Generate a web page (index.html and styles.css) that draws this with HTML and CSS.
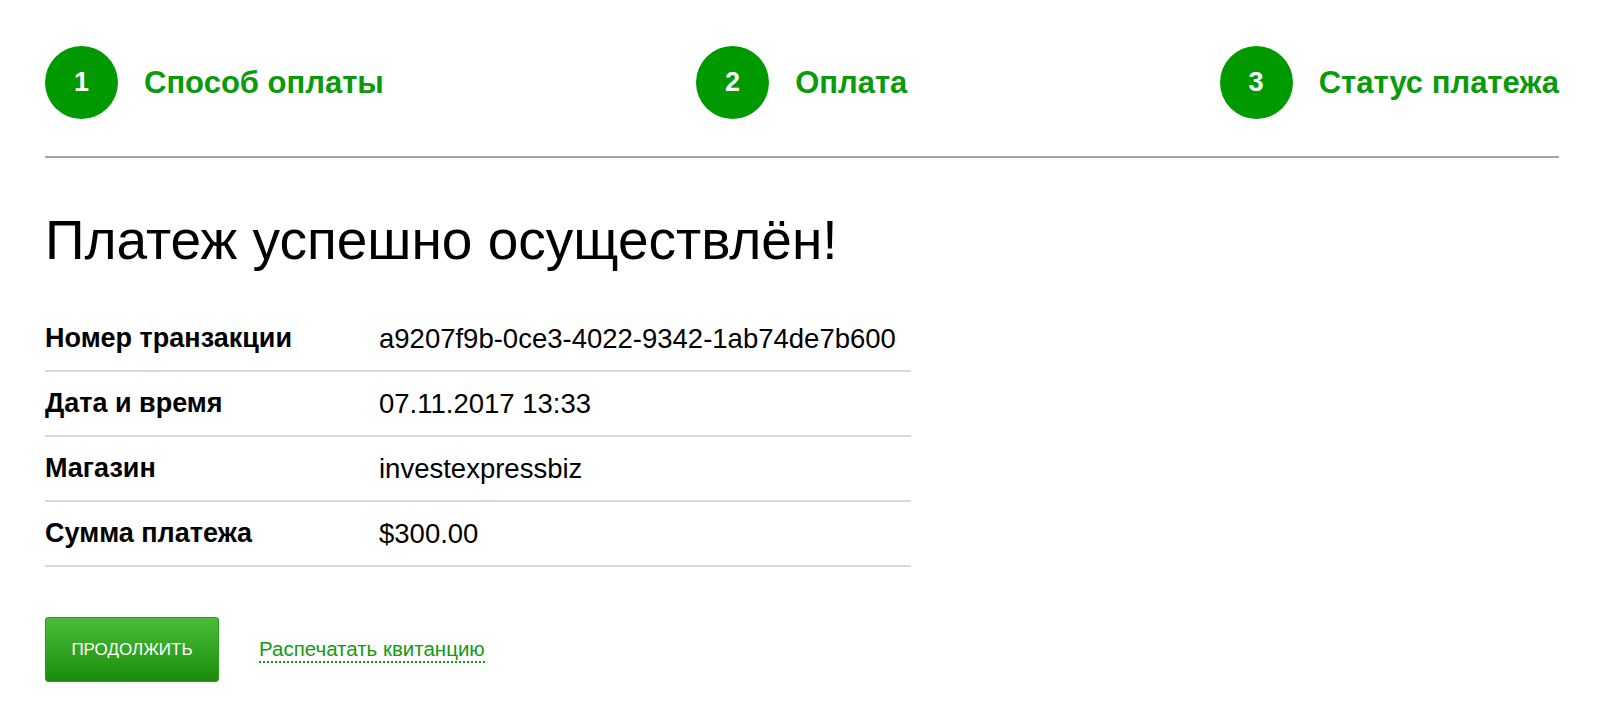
FILE: index.html
```html
<!DOCTYPE html>
<html>

<head>
  <meta charset="UTF-8">
  <title>Статус платежа</title>
  <link rel="stylesheet" href="styles.css">
</head>

<body>
  <div class="wrapper">
    <div class="steps">
      <div class="step">
        <span class="step-num">1</span>
        <span class="step-title">Способ оплаты</span>
      </div>
      <div class="step">
        <span class="step-num">2</span>
        <span class="step-title">Оплата</span>
      </div>
      <div class="step">
        <span class="step-num">3</span>
        <span class="step-title">Статус платежа</span>
      </div>
    </div>

    <h1 class="title">Платеж успешно осуществлён!</h1>

    <table class="details">
      <tr>
        <th>Номер транзакции</th>
        <td>a9207f9b-0ce3-4022-9342-1ab74de7b600</td>
      </tr>
      <tr>
        <th>Дата и время</th>
        <td>07.11.2017 13:33</td>
      </tr>
      <tr>
        <th>Магазин</th>
        <td>investexpressbiz</td>
      </tr>
      <tr>
        <th>Сумма платежа</th>
        <td>$300.00</td>
      </tr>
    </table>

    <div class="actions">
      <button class="btn">Продолжить</button>
      <a class="print-link" href="#">Распечатать квитанцию</a>
    </div>
  </div>
</body>

</html>
```

FILE: styles.css
```css
body {
  margin: 0;
  font-family: "Liberation Sans", Arial, sans-serif;
  color: #000;
  background: #fff;
}

.wrapper {
  padding: 46px 41px 0 45px;
}

.steps {
  display: flex;
  justify-content: space-between;
  align-items: center;
  padding-bottom: 37px;
  border-bottom: 2px solid #a3a3a3;
}

.step {
  display: flex;
  align-items: center;
  gap: 26px;
}

.step-num {
  display: flex;
  align-items: center;
  justify-content: center;
  width: 73px;
  height: 73px;
  border-radius: 50%;
  background: #009900;
  color: #fff;
  font-size: 27px;
  font-weight: bold;
}

.step-title {
  color: #0a9a0a;
  font-size: 31px;
  font-weight: bold;
}

.title {
  margin: 51px 0 35px;
  font-size: 55px;
  font-weight: normal;
  line-height: 63px;
}

.details {
  width: 866px;
  border-collapse: collapse;
  font-size: 27px;
}

.details th,
.details td {
  height: 63px;
  padding: 0;
  line-height: 63px;
  text-align: left;
  vertical-align: middle;
  border-bottom: 2px solid #d9d9d9;
}

.details th {
  width: 334px;
  font-weight: bold;
}

.details td {
  font-size: 27.5px;
}

.actions {
  display: flex;
  align-items: center;
  gap: 40px;
  margin-top: 50px;
}

.btn {
  width: 174px;
  height: 65px;
  padding: 0;
  border: 1px solid #2a9c1c;
  border-radius: 3px;
  background: linear-gradient(to bottom, #4cbd38 0%, #33a524 50%, #1b8b0c 100%);
  color: #fff;
  font-family: "Liberation Sans", Arial, sans-serif;
  font-size: 17px;
  text-transform: uppercase;
  cursor: pointer;
}

.print-link {
  color: #119b11;
  font-size: 20.5px;
  text-decoration: none;
  border-bottom: 2px dotted #119b11;
  line-height: 24px;
}
```
